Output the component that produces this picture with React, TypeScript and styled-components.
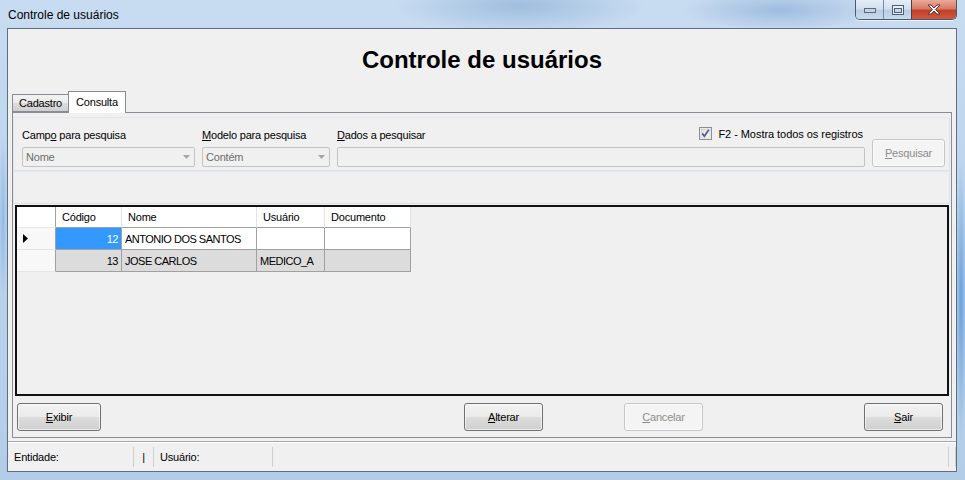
import React from 'react'
import styled, { createGlobalStyle } from 'styled-components'

const GlobalStyle = createGlobalStyle`
  html, body { margin: 0; padding: 0; }
  body {
    width: 965px;
    height: 480px;
    overflow: hidden;
    font-family: "Liberation Sans", Arial, sans-serif;
  }
  * { box-sizing: border-box; }
`

const Window = styled.div`
  width: 965px;
  height: 480px;
  display: flex;
  flex-direction: column;
  padding: 0 8px 8px 7px;
  background:
    radial-gradient(ellipse 180px 40px at 520px 6px, rgba(120, 160, 205, 0.5), transparent 70%),
    radial-gradient(ellipse 140px 30px at 780px 10px, rgba(110, 150, 200, 0.45), transparent 70%),
    radial-gradient(ellipse 8px 200px at 961px 300px, rgba(70, 140, 210, 0.7), transparent 70%),
    radial-gradient(ellipse 6px 120px at 3px 220px, rgba(120, 170, 220, 0.6), transparent 70%),
    linear-gradient(180deg, #c8dcf1 0%, #bcd4ed 40%, #b3cde9 100%);
`

const TitleBar = styled.div`
  height: 28px;
  display: flex;
  justify-content: space-between;
  align-items: flex-start;
`

const Title = styled.div`
  padding: 8px 0 0 1px;
  font-size: 12px;
  color: #000;
`

const CaptionGroup = styled.div`
  display: flex;
  height: 20px;
  border: 1px solid #4b5a6b;
  border-top: none;
  border-radius: 0 0 5px 5px;
  overflow: hidden;
  box-shadow: 0 1px 0 rgba(255, 255, 255, 0.6);
`

const CaptionButton = styled.div<{ $close?: boolean; $w: number }>`
  width: ${p => p.$w}px;
  height: 100%;
  display: flex;
  align-items: center;
  justify-content: center;
  border-left: ${p => (p.$close ? '1px solid #5a3a35' : '1px solid #7a8ba0')};
  &:first-child { border-left: none; }
  background: ${p =>
    p.$close
      ? 'linear-gradient(180deg, #e9a99b 0%, #d97a64 45%, #c1412a 55%, #d0583f 100%)'
      : 'linear-gradient(180deg, #e6eef7 0%, #d2e0ef 45%, #b9cde4 55%, #c9dbee 100%)'};
`

const Client = styled.div`
  flex: 1;
  display: flex;
  flex-direction: column;
  background: #f0f0f0;
  border: 1px solid #5f6f80;
  font-size: 11px;
  letter-spacing: -0.2px;
  color: #000;
`

const Header = styled.div`
  height: 62px;
  display: flex;
  align-items: center;
  justify-content: center;
  font-size: 24px;
  font-weight: bold;
  letter-spacing: 0;
  padding-bottom: 1px;
`

const TabStrip = styled.div`
  height: 21px;
  display: flex;
  align-items: flex-end;
  padding-left: 4px;
  position: relative;
  z-index: 1;
`

const Tab = styled.div<{ $active?: boolean }>`
  height: ${p => (p.$active ? 22 : 18)}px;
  margin-bottom: ${p => (p.$active ? -1 : 0)}px;
  margin-left: ${p => (p.$active ? -1 : 0)}px;
  padding: 0 ${p => (p.$active ? 7 : 6)}px 1px;
  display: flex;
  align-items: center;
  border: 1px solid #898c95;
  border-bottom: ${p => (p.$active ? 'none' : '1px solid #898c95')};
  background: ${p =>
    p.$active ? '#ffffff' : 'linear-gradient(180deg, #f2f2f2 0%, #ebebeb 50%, #dddddd 51%, #cfcfcf 100%)'};
`

const TabPage = styled.div`
  height: 326px;
  margin: 0 4px;
  border: 1px solid #898c95;
  background: #f0f0f0;
  display: flex;
  flex-direction: column;
  padding: 4px 1px 0 0;
`

const Panel = styled.div<{ $h: number }>`
  height: ${p => p.$h}px;
  border: 1px solid #dce3ea;
  border-top-color: #e4e8ec;
  border-left-color: #e4e8ec;
  display: flex;
  align-items: flex-end;
  padding: 0 4px 3px 8px;
  gap: 7px;
`

const Field = styled.div<{ $w: number }>`
  width: ${p => p.$w}px;
  display: flex;
  flex-direction: column;
`

const LabelRow = styled.div`
  height: 18px;
  display: flex;
  justify-content: space-between;
  align-items: flex-start;
  padding-right: 2px;
`

const Label = styled.span`
  white-space: nowrap;
`

const CheckWrap = styled.div`
  display: flex;
  align-items: center;
  gap: 6px;
  margin-top: -2px;
  letter-spacing: -0.05px;
`

const Combo = styled.div`
  height: 20px;
  border: 1px solid #c2c2c2;
  border-radius: 2px;
  background: #f0f0f0;
  display: flex;
  align-items: center;
  justify-content: space-between;
  padding: 0 4px 0 3px;
  color: #6d6d6d;
`

const TextInput = styled.div`
  height: 20px;
  border: 1px solid #c2c2c2;
  border-radius: 2px;
  background: #f0f0f0;
`

const Button = styled.div<{ $w: number; $disabled?: boolean; $ml?: number }>`
  width: ${p => p.$w}px;
  height: 28px;
  margin-left: ${p => p.$ml ?? 0}px;
  flex-shrink: 0;
  display: flex;
  align-items: center;
  justify-content: center;
  border-radius: 3px;
  color: ${p => (p.$disabled ? '#8d8d8d' : '#000')};
  border: 1px solid ${p => (p.$disabled ? '#c4c6c8' : '#707070')};
  background: ${p =>
    p.$disabled
      ? '#f4f4f4'
      : 'linear-gradient(180deg, #f2f2f2 0%, #ebebeb 48%, #dddddd 52%, #cfcfcf 100%)'};
  box-shadow: inset 0 0 0 1px rgba(255, 255, 255, 0.6);
`

const Grid = styled.div`
  height: 191px;
  margin: 1px 1px 0 2px;
  border: 2px solid #111;
  background: #f0f0f0;
`

const Table = styled.div`
  display: grid;
  grid-template-columns: 39px 66px 135px 68px 86px;
  grid-template-rows: 21px;
  grid-auto-rows: 22px;
  width: 394px;
`

const HeadCell = styled.div<{ $first?: boolean }>`
  background: #ffffff;
  border-right: 1px solid ${p => (p.$first ? '#a0a0a0' : '#e2e2e2')};
  border-bottom: 1px solid ${p => (p.$first ? '#e8e8e8' : '#a0a0a0')};
  display: flex;
  align-items: center;
  padding-left: 6px;
`

const Cell = styled.div<{ $bg: string; $right?: boolean; $color?: string }>`
  background: ${p => p.$bg};
  border-right: 1px solid #a0a0a0;
  border-bottom: 1px solid #a0a0a0;
  display: flex;
  align-items: center;
  justify-content: ${p => (p.$right ? 'flex-end' : 'flex-start')};
  padding: 0 3px;
  letter-spacing: -0.5px;
  color: ${p => p.$color ?? '#000'};
  white-space: nowrap;
  overflow: hidden;
`

const Indicator = styled.div`
  background: #f8f8f8;
  border-right: 1px solid #a0a0a0;
  border-bottom: 1px solid #e4e4e4;
  display: flex;
  align-items: center;
  padding-left: 6px;
`

const ButtonRow = styled.div`
  display: flex;
  align-items: center;
  padding: 7px 0 0 4px;
`

const StatusBar = styled.div`
  height: 30px;
  margin-top: 3px;
  border-top: 1px solid #a8a8a8;
  box-shadow: inset 0 1px 0 #ffffff;
  display: flex;
  align-items: center;
`

const StatusPanel = styled.div<{ $w?: number; $center?: boolean }>`
  width: ${p => (p.$w ? `${p.$w}px` : 'auto')};
  flex: ${p => (p.$w ? 'none' : '1')};
  height: 20px;
  display: flex;
  align-items: center;
  justify-content: ${p => (p.$center ? 'center' : 'flex-start')};
  padding-left: ${p => (p.$center ? 0 : 6)}px;
  border-right: 1px solid #cfcfcf;
`

const MinimizeIcon = () => (
  <svg width="12" height="6" viewBox="0 0 12 6">
    <rect x="0.5" y="1.5" width="11" height="4" fill="#c8d3df" stroke="#5b6b7d" />
  </svg>
)

const MaximizeIcon = () => (
  <svg width="12" height="10" viewBox="0 0 12 10">
    <rect x="0.5" y="0.5" width="11" height="9" fill="#e8eef5" stroke="#4f5f72" />
    <rect x="2.5" y="3.5" width="7" height="4" fill="#c9d7e6" stroke="#4f5f72" />
  </svg>
)

const CloseIcon = () => (
  <svg width="14" height="11" viewBox="0 0 14 11">
    <path
      d="M1 1 L4 1 L7 4 L10 1 L13 1 L8.5 5.5 L13 10 L10 10 L7 7 L4 10 L1 10 L5.5 5.5 Z"
      fill="#ffffff"
      stroke="#4b2a24"
      strokeWidth="0.9"
      strokeLinejoin="round"
    />
  </svg>
)

const ComboArrow = () => (
  <svg width="7" height="4" viewBox="0 0 7 4">
    <path d="M0 0 L7 0 L3.5 4 Z" fill="#a6a6a6" />
  </svg>
)

const CheckBox = () => (
  <svg width="13" height="13" viewBox="0 0 13 13">
    <defs>
      <linearGradient id="cbg" x1="0" y1="0" x2="1" y2="1">
        <stop offset="0" stopColor="#dcdcdc" />
        <stop offset="1" stopColor="#fbfbfb" />
      </linearGradient>
    </defs>
    <rect x="0.5" y="0.5" width="12" height="12" fill="#f4f4f4" stroke="#8f8f8f" />
    <rect x="2" y="2" width="9" height="9" fill="url(#cbg)" stroke="#c2c2c2" strokeWidth="0.5" />
    <path d="M3.2 6.4 L5.4 9.2 L9.8 2.8" fill="none" stroke="#4a5f97" strokeWidth="1.7" />
  </svg>
)

const RowArrow = () => (
  <svg width="5" height="9" viewBox="0 0 5 9">
    <path d="M0 0 L5 4.5 L0 9 Z" fill="#000" />
  </svg>
)

interface Usuario {
  codigo: number
  nome: string
  usuario: string
  documento: string
}

const usuarios: Usuario[] = [
  { codigo: 12, nome: 'ANTONIO DOS SANTOS', usuario: '', documento: '' },
  { codigo: 13, nome: 'JOSE CARLOS', usuario: 'MEDICO_A', documento: '' },
]

const App: React.FC = () => {
  return (
    <>
      <GlobalStyle />
      <Window>
        <TitleBar>
          <Title>Controle de usuários</Title>
          <CaptionGroup>
            <CaptionButton $w={27}>
              <MinimizeIcon />
            </CaptionButton>
            <CaptionButton $w={28}>
              <MaximizeIcon />
            </CaptionButton>
            <CaptionButton $w={45} $close>
              <CloseIcon />
            </CaptionButton>
          </CaptionGroup>
        </TitleBar>

        <Client>
          <Header>Controle de usuários</Header>

          <TabStrip>
            <Tab>Cadastro</Tab>
            <Tab $active>Consulta</Tab>
          </TabStrip>

          <TabPage>
            <Panel $h={54}>
              <Field $w={173}>
                <LabelRow>
                  <Label>
                    Camp<u>o</u> para pesquisa
                  </Label>
                </LabelRow>
                <Combo>
                  Nome
                  <ComboArrow />
                </Combo>
              </Field>
              <Field $w={128}>
                <LabelRow>
                  <Label>
                    <u>M</u>odelo para pesquisa
                  </Label>
                </LabelRow>
                <Combo>
                  Contém
                  <ComboArrow />
                </Combo>
              </Field>
              <Field $w={528}>
                <LabelRow>
                  <Label>
                    <u>D</u>ados a pesquisar
                  </Label>
                  <CheckWrap>
                    <CheckBox />
                    <Label>F2 - Mostra todos os registros</Label>
                  </CheckWrap>
                </LabelRow>
                <TextInput />
              </Field>
              <Button $w={73} $disabled>
                <span>
                  <u>P</u>esquisar
                </span>
              </Button>
            </Panel>

            <Panel $h={33} />

            <Grid>
              <Table>
                <HeadCell $first />
                <HeadCell>Código</HeadCell>
                <HeadCell>Nome</HeadCell>
                <HeadCell>Usuário</HeadCell>
                <HeadCell>Documento</HeadCell>
                {usuarios.map((u, i) => {
                  const bg = i % 2 === 0 ? '#ffffff' : '#dcdcdc'
                  const selected = i === 0
                  return (
                    <React.Fragment key={u.codigo}>
                      <Indicator>{selected && <RowArrow />}</Indicator>
                      <Cell
                        $bg={selected ? '#3399ff' : bg}
                        $color={selected ? '#ffffff' : '#000'}
                        $right
                      >
                        {u.codigo}
                      </Cell>
                      <Cell $bg={bg}>{u.nome}</Cell>
                      <Cell $bg={bg}>{u.usuario}</Cell>
                      <Cell $bg={bg}>{u.documento}</Cell>
                    </React.Fragment>
                  )
                })}
              </Table>
            </Grid>

            <ButtonRow>
              <Button $w={84}>
                <span>
                  <u>E</u>xibir
                </span>
              </Button>
              <Button $w={79} $ml={363}>
                <span>
                  <u>A</u>lterar
                </span>
              </Button>
              <Button $w={79} $ml={81} $disabled>
                <span>
                  <u>C</u>ancelar
                </span>
              </Button>
              <Button $w={79} $ml={161}>
                <span>
                  <u>S</u>air
                </span>
              </Button>
            </ButtonRow>
          </TabPage>

          <StatusBar>
            <StatusPanel $w={126}>Entidade:</StatusPanel>
            <StatusPanel $w={20} $center>
              |
            </StatusPanel>
            <StatusPanel $w={119}>Usuário:</StatusPanel>
            <StatusPanel />
            <StatusPanel $w={5} />
          </StatusBar>
        </Client>
      </Window>
    </>
  )
}

export default App
